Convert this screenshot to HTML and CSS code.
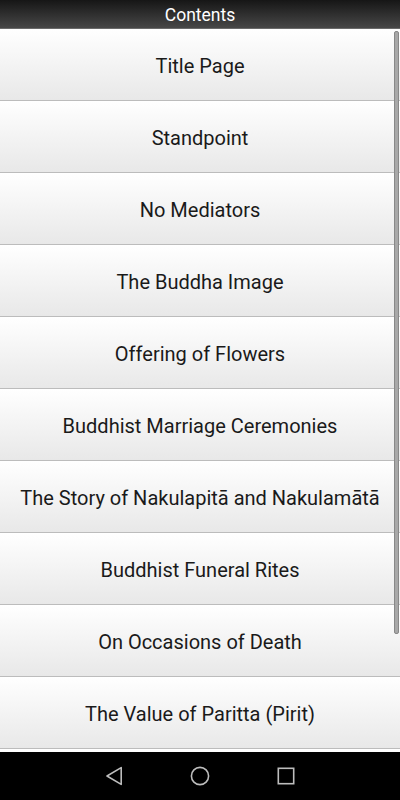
FILE: index.html
```html
<!DOCTYPE html>
<html>
<head>
<meta charset="utf-8">
<link rel="stylesheet" href="styles.css">
</head>
<body>
<div class="app">
  <header class="header">Contents</header>
  <div class="list-wrap">
    <ul class="list">
      <li class="item">Title Page</li>
      <li class="item">Standpoint</li>
      <li class="item">No Mediators</li>
      <li class="item">The Buddha Image</li>
      <li class="item">Offering of Flowers</li>
      <li class="item">Buddhist Marriage Ceremonies</li>
      <li class="item">The Story of Nakulapitā and Nakulamātā</li>
      <li class="item">Buddhist Funeral Rites</li>
      <li class="item">On Occasions of Death</li>
      <li class="item">The Value of Paritta (Pirit)</li>
      <li class="item item-empty"></li>
    </ul>
    <div class="scrollbar"></div>
  </div>
  <nav class="navbar">
    <svg class="nav-icon" width="20" height="20" viewBox="0 0 20 20"><path d="M17.2 1.6 L3 10 L17.2 18.4 Z" fill="none" stroke="#bdbdbd" stroke-width="1.6" stroke-linejoin="round"/></svg>
    <svg class="nav-icon" width="20" height="20" viewBox="0 0 20 20"><circle cx="10" cy="10" r="8.6" fill="none" stroke="#bdbdbd" stroke-width="1.6"/></svg>
    <svg class="nav-icon" width="20" height="20" viewBox="0 0 20 20"><rect x="2.3" y="2.3" width="15.4" height="15.4" fill="none" stroke="#bdbdbd" stroke-width="1.6"/></svg>
  </nav>
</div>
</body>
</html>
```

FILE: styles.css
```css
* { box-sizing: border-box; }
html, body {
  margin: 0;
  padding: 0;
  width: 400px;
  height: 800px;
  overflow: hidden;
  background: #fff;
  font-family: Roboto, "Noto Sans", sans-serif;
}
.app {
  display: flex;
  flex-direction: column;
  height: 800px;
}
.header {
  height: 29px;
  flex: none;
  background: linear-gradient(#161616, #474747);
  border-bottom: 1px solid #6a6a6a;
  color: #fff;
  font-size: 17.5px;
  display: flex;
  align-items: center;
  justify-content: center;
  padding-top: 1px;
}
.list-wrap {
  flex: 1;
  position: relative;
  overflow: hidden;
}
.list {
  list-style: none;
  margin: 0;
  padding: 0;
}
.item {
  height: 72px;
  border-bottom: 1px solid #bcbcbc;
  background: linear-gradient(#ffffff, #e8e8e8);
  display: flex;
  align-items: center;
  justify-content: center;
  font-size: 20px;
  color: #1a1a1a;
  padding-top: 2px;
  white-space: nowrap;
}
.scrollbar {
  position: absolute;
  top: 2px;
  right: 1px;
  width: 5px;
  height: 603px;
  background: #a8a8a8;
  border: 1px solid #888;
  border-radius: 2px;
}
.navbar {
  height: 48px;
  flex: none;
  background: #000;
  display: flex;
  align-items: center;
  justify-content: center;
  gap: 66px;
}
.nav-icon { display: block; }
```
